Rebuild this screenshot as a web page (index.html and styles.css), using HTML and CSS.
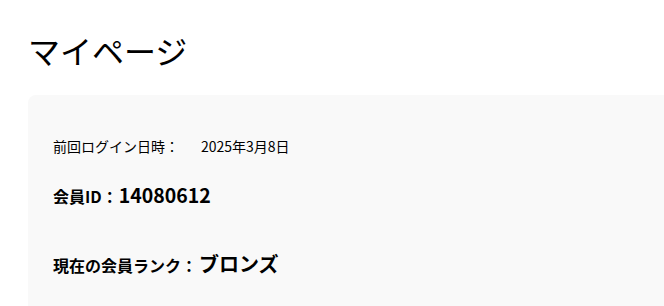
FILE: index.html
```html
<!DOCTYPE html>
<html lang="ja">
<head>
<meta charset="utf-8">
<title>マイページ</title>
<link rel="stylesheet" href="styles.css">
</head>
<body>
<main class="page">
  <h1 class="page-title">マイページ</h1>
  <section class="card">
    <p class="login-row"><span class="login-label">前回ログイン日時：</span><span class="login-value">2025年3月8日</span></p>
    <p class="info-row info-id"><span class="info-label">会員ID：</span><span class="info-value info-number">14080612</span></p>
    <p class="info-row info-rank"><span class="info-label">現在の会員ランク：</span><span class="info-value">ブロンズ</span></p>
  </section>
</main>
</body>
</html>
```

FILE: styles.css
```css
html, body {
  margin: 0;
  padding: 0;
  overflow: hidden;
  background: #ffffff;
}

body {
  font-family: "Noto Sans CJK JP", "Noto Sans", sans-serif;
  color: #000000;
}

.page {
  width: 960px;
  padding: 30px 0 0 28px;
}

.page-title {
  margin: 0;
  font-size: 32px;
  line-height: 40px;
  font-weight: 400;
}

.card {
  margin-top: 25px;
  background: #f9f9f9;
  border-radius: 8px;
  padding: 41px 25px 60px;
}

.login-row {
  margin: 0;
  font-size: 14px;
  line-height: 20px;
}

.login-value {
  margin-left: 22px;
}

.info-row {
  margin: 0;
  font-size: 16px;
  line-height: 24px;
  font-weight: 700;
}

.info-id {
  margin-top: 27px;
}

.info-rank {
  margin-top: 44px;
}

.info-value {
  margin-left: 2px;
  font-size: 20px;
  font-weight: 700;
}

.info-number {
  margin-left: 1px;
  font-size: 19.5px;
}
```
